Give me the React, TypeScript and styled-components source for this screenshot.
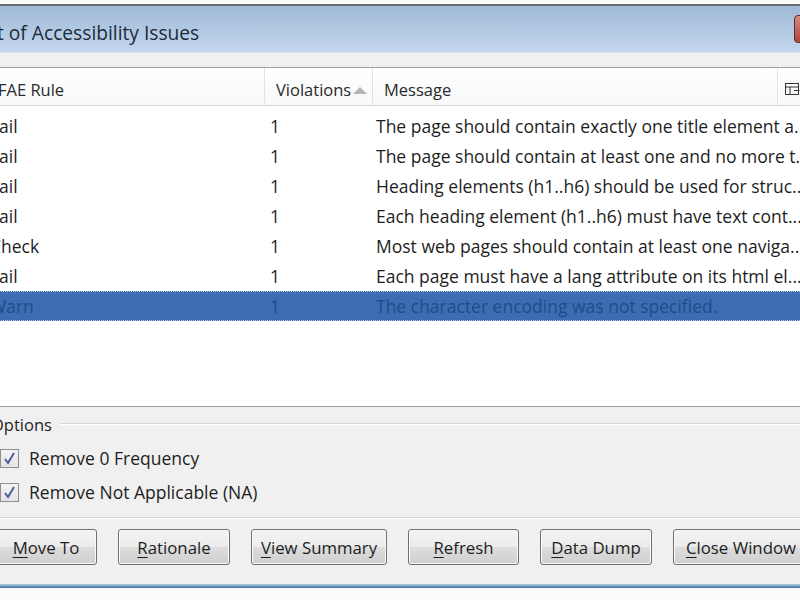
import React from "react";
import styled, {createGlobalStyle} from "styled-components";

const GlobalStyle = createGlobalStyle`
  html, body {
    margin: 0;
    padding: 0;
    background: #fbfbfb;
    overflow: hidden;
  }
  body {
    font-family: "Open Sans", "Noto Sans", sans-serif;
    color: #1e1e1e;
  }
`

const Screen = styled.div`
  width: 800px;
  height: 600px;
  overflow: hidden;
  padding-top: 4px;
  box-sizing: border-box;
`

const Window = styled.div`
  margin-left: -24px;
  width: 870px;
  display: flex;
  flex-direction: column;
  background: #f0f0f0;
  border-top: 2px solid #6b6b6b;
`

const TitleBar = styled.div`
  height: 46px;
  display: flex;
  align-items: center;
  justify-content: space-between;
  background: linear-gradient(#9fb9d6, #c3d7ed);
  border-bottom: 1px solid #dfe8f2;
`

const Title = styled.div`
  font-size: 19.2px;
  color: #1c2a3a;
  margin-left: -3px;
  margin-top: 6px;
`

const CloseBox = styled.div`
  width: 40px;
  height: 26px;
  margin-right: 10px;
  border: 1px solid #5c2a2a;
  border-radius: 4px;
  background: linear-gradient(#d58a80, #b2463a);
`

const Band = styled.div`
  height: 14px;
  background: #f0f0f0;
`

const TableFrame = styled.div`
  border-top: 1px solid #a0a0a0;
  border-bottom: 1px solid #a0a0a0;
  background: #ffffff;
  height: 338px;
  display: flex;
  flex-direction: column;
`

const HeaderRow = styled.div`
  height: 37px;
  display: flex;
  border-bottom: 1px solid #d8d8d8;
  background: linear-gradient(#ffffff, #f7f8f9);
`

const HeaderCell = styled.div<{ $w: number; $pad: number }>`
  width: ${p => p.$w}px;
  flex: none;
  box-sizing: border-box;
  padding-left: ${p => p.$pad}px;
  padding-top: 5px;
  display: flex;
  align-items: center;
  font-size: 16.5px;
  color: #2a2a2a;
  border-right: 1px solid #e3e3e3;
`

const SortArrow = styled.span`
  width: 0;
  height: 0;
  margin-left: 2px;
  margin-top: 2px;
  border-left: 7px solid transparent;
  border-right: 7px solid transparent;
  border-bottom: 7px solid #b4b4b4;
`

const Rows = styled.div`
  padding-top: 5px;
  display: flex;
  flex-direction: column;
`

const Row = styled.div<{ $selected?: boolean }>`
  height: 30px;
  display: flex;
  box-sizing: border-box;
  background: ${p => (p.$selected ? "#3d6db0" : "transparent")};
  color: ${p => (p.$selected ? "#1d4c8c" : "#1e1e1e")};
  border-top: 1px dotted ${p => (p.$selected ? "#b8c8dc" : "transparent")};
  border-bottom: 1px dotted ${p => (p.$selected ? "#b8c8dc" : "transparent")};
`

const Cell = styled.div<{ $w: number; $pad: number }>`
  width: ${p => p.$w}px;
  flex: none;
  box-sizing: border-box;
  padding-left: ${p => p.$pad}px;
  display: flex;
  align-items: center;
  font-size: 17.5px;
  white-space: nowrap;
  overflow: hidden;
`

const Options = styled.div`
  height: 110px;
  display: flex;
  flex-direction: column;
  border-bottom: 1px solid #d5d5d5;
  box-shadow: 0 1px 0 #ffffff;
`

const GroupTitle = styled.div`
  display: flex;
  align-items: center;
  height: 22px;
  margin-top: 6px;
  padding-left: 15px;
  font-size: 16.5px;
  color: #1e1e1e;
  &::after {
    content: "";
    flex: 1;
    margin-left: 8px;
    margin-top: -2px;
    border-top: 1px solid #d5d5d5;
    box-shadow: 0 1px 0 #ffffff;
  }
`

const CheckRow = styled.label<{ $top: number }>`
  display: flex;
  align-items: center;
  gap: 10px;
  margin-top: ${p => p.$top}px;
  padding-left: 24px;
  height: 22px;
  font-size: 17.5px;
  color: #1e1e1e;
`

const CheckBox = styled.span`
  width: 19px;
  height: 19px;
  box-sizing: border-box;
  border: 1px solid #8f8f8f;
  background: linear-gradient(#f4f4f4, #e4e4e4);
  display: flex;
  align-items: center;
  justify-content: center;
`

const ButtonBar = styled.div`
  display: flex;
  gap: 21px;
  padding: 11px 0 0 19px;
  height: 56px;
  box-sizing: border-box;
`

const Button = styled.div<{ $w: number }>`
  width: ${p => p.$w}px;
  height: 36px;
  flex: none;
  box-sizing: border-box;
  border: 1px solid #707070;
  border-radius: 3px;
  background: linear-gradient(#f4f4f4 0%, #ebebeb 50%, #dddddd 51%, #cfcfcf 100%);
  box-shadow: inset 0 0 0 1px #fafafa;
  display: flex;
  align-items: center;
  justify-content: center;
  font-size: 16.8px;
  color: #1e1e1e;
  u {
    text-decoration-thickness: 1px;
    text-underline-offset: 3px;
  }
`

const Footer = styled.div`
  height: 10px;
  background: #f0f0f0;
`

const BottomEdge = styled.div`
  height: 4px;
  background: linear-gradient(#b5d0ea, #3e6c9a);
`

const cols = [289, 108, 405, 68]

const rows = [
  ["Fail", "The page should contain exactly one title element a..."],
  ["Fail", "The page should contain at least one and no more t..."],
  ["Fail", "Heading elements (h1..h6) should be used for struc..."],
  ["Fail", "Each heading element (h1..h6) must have text cont..."],
  ["Check", "Most web pages should contain at least one naviga..."],
  ["Fail", "Each page must have a lang attribute on its html el..."],
  ["Warn", "The character encoding was not specified."],
]

const buttons: [string, string, number][] = [
  ["M", "ove To", 102],
  ["R", "ationale", 112],
  ["V", "iew Summary", 136],
  ["R", "efresh", 111],
  ["D", "ata Dump", 112],
  ["C", "lose Window", 136],
]

function ColumnIcon() {
  return (
    <svg width="15" height="13" viewBox="0 0 15 13">
      <rect x="0.5" y="0.5" width="13" height="11" fill="none" stroke="#333" />
      <line x1="0.5" y1="4" x2="13.5" y2="4" stroke="#333" />
      <line x1="5" y1="4" x2="5" y2="11.5" stroke="#333" />
      <line x1="9" y1="7.5" x2="14.5" y2="7.5" stroke="#333" />
    </svg>
  )
}

function Check() {
  return (
    <svg width="13" height="13" viewBox="0 0 13 13">
      <path d="M2 7 L5 11 L11 1" fill="none" stroke="#4b5f98" strokeWidth="2" />
    </svg>
  )
}

export default function App() {
  return (
    <Screen>
      <GlobalStyle />
      <Window>
        <TitleBar>
          <Title>List of Accessibility Issues</Title>
          <CloseBox />
        </TitleBar>
        <Band />
        <TableFrame>
          <HeaderRow>
            <HeaderCell $w={cols[0]} $pad={22}>FAE Rule</HeaderCell>
            <HeaderCell $w={cols[1]} $pad={11}>Violations<SortArrow /></HeaderCell>
            <HeaderCell $w={cols[2]} $pad={11}>Message</HeaderCell>
            <HeaderCell $w={cols[3]} $pad={7}><ColumnIcon /></HeaderCell>
          </HeaderRow>
          <Rows>
            {rows.map(([rule, msg], i) => (
              <Row key={i} $selected={i === rows.length - 1}>
                <Cell $w={cols[0]} $pad={14}>{rule}</Cell>
                <Cell $w={cols[1]} $pad={5}>1</Cell>
                <Cell $w={cols[2] + cols[3]} $pad={3}>{msg}</Cell>
              </Row>
            ))}
          </Rows>
        </TableFrame>
        <Options>
          <GroupTitle>Options</GroupTitle>
          <CheckRow $top={12}><CheckBox><Check /></CheckBox>Remove 0 Frequency</CheckRow>
          <CheckRow $top={12}><CheckBox><Check /></CheckBox>Remove Not Applicable (NA)</CheckRow>
        </Options>
        <ButtonBar>
          {buttons.map(([key, rest, w], i) => (
            <Button key={i} $w={w}><u>{key}</u>{rest}</Button>
          ))}
        </ButtonBar>
        <Footer />
        <BottomEdge />
      </Window>
    </Screen>
  )
}
